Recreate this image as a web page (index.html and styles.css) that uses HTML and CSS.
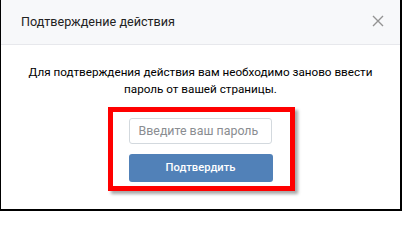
FILE: index.html
```html
<!DOCTYPE html>
<html lang="ru">
<head>
<meta charset="utf-8">
<link rel="stylesheet" href="styles.css">
</head>
<body>
<div class="frame">
  <div class="header">
    <div class="title">Подтверждение действия</div>
    <svg class="close" width="12" height="12" viewBox="0 0 12 12"><path d="M1 1L11 11M11 1L1 11" stroke="#939393" stroke-width="1.4" fill="none"/></svg>
  </div>
  <div class="body">
    <p class="msg">Для подтверждения действия вам необходимо заново ввести<br>пароль от вашей страницы.</p>
    <div class="highlight">
      <div class="input">Введите ваш пароль</div>
      <div class="button">Подтвердить</div>
    </div>
  </div>
</div>
</body>
</html>
```
FILE: styles.css
```css
html, body { margin: 0; padding: 0; background: #fff; }
.frame {
  width: 402px; height: 211px; box-sizing: border-box;
  border-left: 1px solid #000; border-right: 2px solid #000; border-bottom: 2px solid #000;
  font-family: Roboto, "Open Sans", sans-serif; color: #000;
  display: flex; flex-direction: column;
}
.header {
  height: 45px; box-sizing: border-box; background: #f7f8fa;
  border-bottom: 1px solid #e7e8ec;
  display: flex; align-items: center; justify-content: space-between;
  padding: 0 16px 0 20px;
}
.title { font-size: 12.6px; color: #222; padding-bottom: 1px; }
.close { display: block; margin-top: -2px; }
.body { display: flex; flex-direction: column; align-items: center; }
.msg {
  margin: 19px 0 0; text-align: center; font-size: 11.7px; line-height: 17px; color: #000;
}
.highlight {
  margin-top: 9px; margin-left: 1px;
  border: 5px solid #ff0000; padding: 6px 17px 4px 16px;
  box-shadow: 3px 3px 3px rgba(0,0,0,0.35);
  display: flex; flex-direction: column; gap: 10px;
}
.input {
  width: 143px; height: 26px; box-sizing: border-box;
  border: 1px solid #d3d9de; border-radius: 3px;
  font-size: 12.4px; color: #8a8d91; line-height: 24px; padding-left: 9px;
}
.button {
  width: 144px; height: 28px; border-radius: 3px; background: #5181b8;
  color: #fff; font-size: 11.2px; font-weight: 500; text-align: center; line-height: 28px;
}
```
